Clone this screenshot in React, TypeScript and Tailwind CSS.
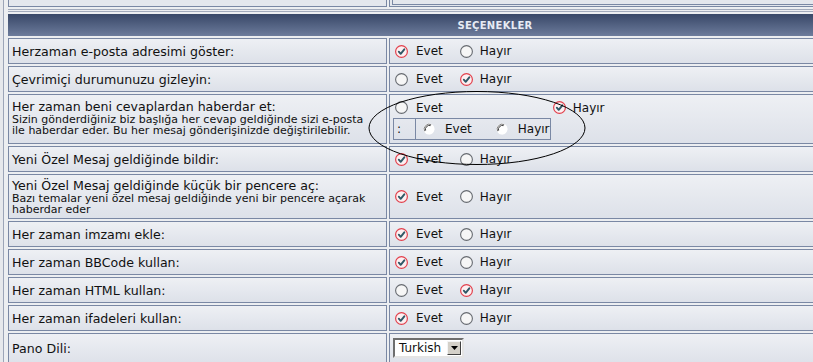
import React from 'react';

const Radio: React.FC<{ checked?: boolean }> = ({ checked }) =>
  checked ? (
    <svg width="13" height="13" viewBox="0 0 13 13" className="shrink-0">
      <circle cx="6.5" cy="6.5" r="5.9" fill="#fcf0f2" stroke="#e2404c" strokeWidth="1.2" />
      <path d="M3.8 6.7 L5.7 8.8 L9.3 4.3" fill="none" stroke="#2f5866" strokeWidth="1.9" strokeLinecap="round" strokeLinejoin="round" />
    </svg>
  ) : (
    <svg width="13" height="13" viewBox="0 0 13 13" className="shrink-0">
      <circle cx="6.5" cy="6.5" r="5.9" fill="#f6f6f6" stroke="#666a70" strokeWidth="1.1" />
    </svg>
  );

// old-style windows radio used in the broken nested box
const ClassicRadio: React.FC = () => (
  <svg width="12" height="12" viewBox="0 0 12 12" className="shrink-0">
    <circle cx="6" cy="6" r="5.5" fill="#ffffff" />
    <path d="M1.6 8.2 A5 5 0 0 1 8.2 1.6" fill="none" stroke="#808080" strokeWidth="1" />
    <path d="M2.6 7.6 A4 4 0 0 1 7.6 2.6" fill="none" stroke="#404040" strokeWidth="1" />
    <path d="M10.4 3.8 A5 5 0 0 1 3.8 10.4" fill="none" stroke="#ffffff" strokeWidth="1" />
  </svg>
);

const YesNo: React.FC<{ yes: boolean }> = ({ yes }) => (
  <div className="flex items-center">
    <Radio checked={yes} />
    <span className="ml-[8px]">Evet</span>
    <span className="ml-[17px] flex items-center">
      <Radio checked={!yes} />
    </span>
    <span className="ml-[7px]">Hayır</span>
  </div>
);

const cell = 'border border-[#7a88a4] bg-gradient-to-b from-[#eef0f4] to-[#dde1e9]';
const label = 'text-[12.6px] leading-[15px]';
const note = 'text-[11px] leading-[11px] pr-[12px]';

type Row = { label: string; note?: string; yes: boolean; h: string };

const rowsTop: Row[] = [
  { label: 'Herzaman e-posta adresimi göster:', yes: true, h: 'h-[26px]' },
  { label: 'Çevrimiçi durumunuzu gizleyin:', yes: false, h: 'h-[26px]' },
];

const rowsBottom: Row[] = [
  { label: 'Yeni Özel Mesaj geldiğinde bildir:', yes: true, h: 'h-[26px]' },
  {
    label: 'Yeni Özel Mesaj geldiğinde küçük bir pencere aç:',
    note: 'Bazı temalar yeni özel mesaj geldiğinde yeni bir pencere açarak haberdar eder',
    yes: true,
    h: 'h-[45px]',
  },
  { label: 'Her zaman imzamı ekle:', yes: true, h: 'h-[26px]' },
  { label: 'Her zaman BBCode kullan:', yes: true, h: 'h-[26px]' },
  { label: 'Her zaman HTML kullan:', yes: false, h: 'h-[26px]' },
  { label: 'Her zaman ifadeleri kullan:', yes: true, h: 'h-[26px]' },
];

const OptionRow: React.FC<{ row: Row }> = ({ row }) => (
  <div className={`flex gap-[2px] ${row.h}`}>
    <div className={`${cell} w-[379px] shrink-0 pl-[3px] flex flex-col justify-center`}>
      <div className={label}>{row.label}</div>
      {row.note && <div className={note}>{row.note}</div>}
    </div>
    <div className={`${cell} flex-1 pl-[5px] flex items-center`}>
      <YesNo yes={row.yes} />
    </div>
  </div>
);

export default function App() {
  return (
    <div className="w-[813px] h-[362px] overflow-hidden bg-[#e6e8ec] text-[12px] text-[#111] font-['DejaVu_Sans','Verdana',sans-serif] relative">
      <div className="ml-[3px] border-l border-[#9ca5b8] pl-[4px] h-full bg-[#eceef1]">
        <div className="w-[974px] flex flex-col">
          {/* end of previous table */}
          <div className="flex gap-[2px] h-[7px]">
            <div className="w-[379px] shrink-0 border-x border-b border-[#7a88a4] bg-[#e4e7ed]" />
            <div className="flex-1 border-l border-b border-[#7a88a4] bg-[#e4e7ed] pl-[2px]">
              <div className="h-[5px] border-l border-b border-[#7a88a4]" />
            </div>
          </div>
          <div className="mt-[2px] h-px bg-[#a3abbc]" />
          <div className="mt-px h-px bg-[#a3abbc]" />

          {/* header */}
          <div className="mt-[2px] h-[22px] bg-gradient-to-b from-[#394868] to-[#6d7c9c] flex items-center justify-center">
            <span className="text-[10px] font-bold text-[#e6ebf4] tracking-[0.3px]">SEÇENEKLER</span>
          </div>

          <div className="mt-[2px] flex flex-col gap-[2px]">
            {rowsTop.map((r, i) => (
              <OptionRow key={i} row={r} />
            ))}

            {/* notify on reply - with the broken nested box */}
            <div className="flex gap-[2px] h-[50px]">
              <div className={`${cell} w-[379px] shrink-0 pl-[3px] pt-[4px]`}>
                <div className={label}>Her zaman beni cevaplardan haberdar et:</div>
                <div className={note}>
                  Sizin gönderdiğiniz biz başlığa her cevap geldiğinde sizi e-posta ile haberdar eder. Bu her mesaj gönderişinizde değiştirilebilir.
                </div>
              </div>
              <div className={`${cell} flex-1 pl-[5px] pt-[5px]`}>
                <div className="flex items-center h-[15px]">
                  <Radio />
                  <span className="ml-[8px]">Evet</span>
                  <span className="ml-[110px] flex items-center">
                    <Radio checked />
                  </span>
                  <span className="ml-[7px]">Hayır</span>
                </div>
                <div className="mt-[3px] -ml-[2px] flex w-[158px] h-[22px] border border-[#7a88a4]">
                  <div className="w-[22px] border-r border-[#7a88a4] pl-[3px] flex items-center">:</div>
                  <div className="flex-1 flex items-center pl-[7px]">
                    <ClassicRadio />
                    <span className="ml-[10px]">Evet</span>
                    <span className="ml-[24px] flex items-center">
                      <ClassicRadio />
                    </span>
                    <span className="ml-[10px]">Hayır</span>
                  </div>
                </div>
              </div>
            </div>

            {rowsBottom.map((r, i) => (
              <OptionRow key={i} row={r} />
            ))}

            {/* language */}
            <div className="flex gap-[2px] h-[32px]">
              <div className={`${cell} w-[379px] shrink-0 pl-[3px] pt-[7px] ${label}`}>Pano Dili:</div>
              <div className={`${cell} flex-1 pl-[3px] pt-[4px]`}>
                <div className="w-[71px] h-[20px] bg-white border-2 border-t-[#6e6e6e] border-l-[#6e6e6e] border-b-[#e4e4e4] border-r-[#e4e4e4] flex items-center">
                  <span className="pl-[4px] leading-[14px]">Turkish</span>
                  <div className="ml-auto mr-px w-[14px] h-[14px] bg-[#d4d0c8] border border-t-[#f4f4f4] border-l-[#f4f4f4] border-b-[#404040] border-r-[#404040] flex items-center justify-center">
                    <svg width="7" height="4" viewBox="0 0 7 4">
                      <path d="M0 0 H7 L3.5 4 Z" fill="#000" />
                    </svg>
                  </div>
                </div>
              </div>
            </div>
          </div>
        </div>
      </div>

      {/* hand-drawn ellipse marking the broken box */}
      <svg className="absolute left-[367px] top-[90px] pointer-events-none" width="220" height="77" viewBox="0 0 220 77">
        <ellipse cx="110" cy="38" rx="108" ry="36.5" fill="none" stroke="#000" strokeWidth="1" />
      </svg>
    </div>
  );
}
